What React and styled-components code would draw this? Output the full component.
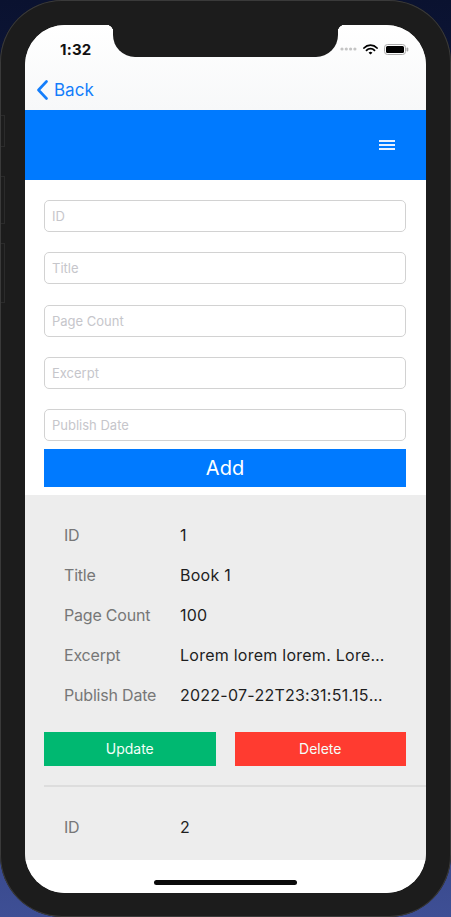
import React from "react";
import styled, { createGlobalStyle } from "styled-components";

const GlobalStyle = createGlobalStyle`
  html, body {
    margin: 0;
    padding: 0;
    width: 451px;
    height: 917px;
    overflow: hidden;
    background: linear-gradient(180deg, #0a1230 0%, #1b2656 50%, #3e4f95 100%);
  }
  * { box-sizing: border-box; }
`;

const books = [
  {
    id: "1",
    title: "Book 1",
    pageCount: "100",
    excerpt: "Lorem lorem lorem. Lorem lorem lorem. Lorem lorem lorem.",
    publishDate: "2022-07-22T23:31:51.157Z",
  },
  {
    id: "2",
    title: "Book 2",
    pageCount: "200",
    excerpt: "Lorem lorem lorem. Lorem lorem lorem.",
    publishDate: "2022-07-21T23:31:51.157Z",
  },
];

const fields = ["ID", "Title", "Page Count", "Excerpt", "Publish Date"];

const Phone = styled.div`
  position: relative;
  width: 451px;
  height: 917px;
  padding: 25px 25px 24px 25px;
  background: #1c1c1c;
  border-radius: 62px;
  box-shadow: inset 0 0 0 1px #3a3a3a;
`;

const SideKey = styled.div`
  position: absolute;
  left: 1px;
  top: ${(p) => p.top}px;
  width: 4px;
  height: ${(p) => p.h}px;
  border: 1px solid #2b2b2b;
  border-left: none;
`;

const Screen = styled.div`
  position: relative;
  height: 100%;
  display: flex;
  flex-direction: column;
  background: #ededed;
  border-radius: 40px;
  overflow: hidden;
  font-family: Inter, "Liberation Sans", sans-serif;
`;

const Notch = styled.div`
  position: absolute;
  top: 0;
  left: 88px;
  width: 225px;
  height: 32px;
  background: #1c1c1c;
  border-radius: 0 0 22px 22px;
  &::before,
  &::after {
    content: "";
    position: absolute;
    top: 0;
    width: 7px;
    height: 7px;
  }
  &::before {
    left: -7px;
    background: radial-gradient(circle at 0 100%, transparent 7px, #1c1c1c 7.5px);
  }
  &::after {
    right: -7px;
    background: radial-gradient(circle at 100% 100%, transparent 7px, #1c1c1c 7.5px);
  }
`;

const TopArea = styled.div`
  background: linear-gradient(180deg, #ffffff 0%, #f7f8f9 100%);
`;

const StatusBar = styled.div`
  height: 44px;
  display: flex;
  align-items: center;
  justify-content: space-between;
  padding: 4px 17px 0 35px;
`;

const Clock = styled.span`
  font-size: 15px;
  font-weight: 700;
  color: #111;
  letter-spacing: 0.2px;
`;

const StatusIcons = styled.div`
  display: flex;
  align-items: center;
  gap: 6px;
`;

const NavBar = styled.div`
  height: 41px;
  display: flex;
  align-items: center;
  padding: 0 0 0 11px;
`;

const BackLink = styled.a`
  display: flex;
  align-items: center;
  gap: 5px;
  color: #147efb;
  font-size: 17px;
  text-decoration: none;
`;

const Header = styled.div`
  height: 70px;
  background: #007aff;
  display: flex;
  align-items: center;
  justify-content: flex-end;
  padding-right: 31px;
`;

const Burger = styled.div`
  display: flex;
  flex-direction: column;
  gap: 2.5px;
  width: 16px;
  span {
    height: 1.5px;
    background: #e8f1ff;
  }
`;

const Form = styled.div`
  background: #fff;
  padding: 20px 20px 8px 19px;
  display: flex;
  flex-direction: column;
  gap: 20.3px;
`;

const Input = styled.input`
  height: 32px;
  width: 100%;
  border: 1px solid #d2d2d2;
  border-radius: 5px;
  padding: 0 7px;
  font-family: inherit;
  font-size: 13px;
  color: #222;
  outline: none;
  &::placeholder {
    color: #c6c6cb;
  }
`;

const AddButton = styled.button`
  margin-top: -12px;
  height: 37.5px;
  border: none;
  background: #007aff;
  color: #fff;
  font-family: inherit;
  font-size: 20px;
  padding: 0;
`;

const List = styled.div`
  flex: 1;
  overflow: hidden;
  background: #ededed;
  padding-left: 19px;
`;

const Item = styled.div`
  padding: 20px 0 19px;
  border-bottom: 2px solid #dddddd;
`;

const Row = styled.div`
  height: 40px;
  display: flex;
  align-items: center;
  padding-left: 20px;
  font-size: 16px;
`;

const Label = styled.span`
  width: 116px;
  flex-shrink: 0;
  color: #777;
  letter-spacing: -0.2px;
`;

const Value = styled.span`
  width: 207px;
  color: #1e1e1e;
  letter-spacing: 0.25px;
  white-space: nowrap;
  overflow: hidden;
  text-overflow: ellipsis;
`;

const Actions = styled.div`
  display: flex;
  gap: 19px;
  padding-right: 20px;
  margin-top: 17px;
`;

const ActionButton = styled.button`
  flex: 1;
  height: 34px;
  border: none;
  padding: 0;
  background: ${(p) => p.color};
  color: #f4fff9;
  font-family: inherit;
  font-size: 14px;
`;

const HomeArea = styled.div`
  height: 33px;
  background: #fff;
  display: flex;
  justify-content: center;
  padding-top: 20px;
`;

const HomeBar = styled.div`
  width: 143px;
  height: 5px;
  border-radius: 3px;
  background: #0a0a0a;
`;

function Signal() {
  return (
    <svg width="17" height="4" viewBox="0 0 17 4">
      {[0, 1, 2, 3].map((i) => (
        <circle key={i} cx={2 + i * 4.3} cy="2" r="1.6" fill="#c4c4c4" />
      ))}
    </svg>
  );
}

function Wifi() {
  return (
    <svg width="15" height="11" viewBox="0 0 15 11">
      <path d="M1 4 A9 9 0 0 1 14 4" stroke="#000" strokeWidth="1.8" fill="none" strokeLinecap="round" />
      <path d="M3.5 6.4 A5.5 5.5 0 0 1 11.5 6.4" stroke="#000" strokeWidth="1.8" fill="none" strokeLinecap="round" />
      <path d="M5.6 8.7 L7.5 10.6 L9.4 8.7 A2.7 2.7 0 0 0 5.6 8.7 Z" fill="#000" />
    </svg>
  );
}

function Battery() {
  return (
    <svg width="25" height="11" viewBox="0 0 25 11">
      <rect x="0.5" y="0.5" width="21" height="10" rx="3" fill="none" stroke="#aaa" />
      <rect x="2" y="2" width="18" height="7" rx="1.5" fill="#000" />
      <rect x="22.5" y="3.5" width="1.8" height="4" rx="0.9" fill="#aaa" />
    </svg>
  );
}

function BookItem({ book }) {
  let values = [book.id, book.title, book.pageCount, book.excerpt, book.publishDate];

  return (
    <Item>
      {fields.map((label, i) => (
        <Row key={label}>
          <Label>{label}</Label>
          <Value>{values[i]}</Value>
        </Row>
      ))}
      <Actions>
        <ActionButton color="#00b871">Update</ActionButton>
        <ActionButton color="#ff3b30">Delete</ActionButton>
      </Actions>
    </Item>
  );
}

export default function App() {
  return (
    <>
      <GlobalStyle />
      <Phone>
        <SideKey top={115} h={32} />
        <SideKey top={176} h={48} />
        <SideKey top={243} h={60} />
        <Screen>
          <TopArea>
            <StatusBar>
              <Clock>1:32</Clock>
              <StatusIcons>
                <Signal />
                <Wifi />
                <Battery />
              </StatusIcons>
            </StatusBar>
            <NavBar>
              <BackLink href="#">
                <svg width="13" height="20" viewBox="0 0 13 20">
                  <path d="M10.5 1.5 L2.5 10 L10.5 18.5" stroke="#147efb" strokeWidth="2.6" fill="none" strokeLinecap="round" strokeLinejoin="round" />
                </svg>
                Back
              </BackLink>
            </NavBar>
          </TopArea>
          <Header>
            <Burger>
              <span />
              <span />
              <span />
            </Burger>
          </Header>
          <Form>
            {fields.map((f) => (
              <Input key={f} placeholder={f} />
            ))}
            <AddButton>Add</AddButton>
          </Form>
          <List>
            {books.map((b) => (
              <BookItem key={b.id} book={b} />
            ))}
          </List>
          <HomeArea>
            <HomeBar />
          </HomeArea>
          <Notch />
        </Screen>
      </Phone>
    </>
  );
}
